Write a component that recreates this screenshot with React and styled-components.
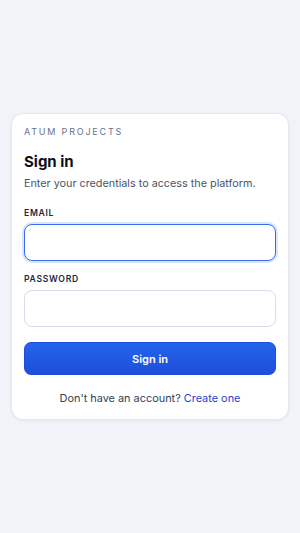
import React from "react";
import styled, { createGlobalStyle } from "styled-components";

const Global = createGlobalStyle`
  html, body { margin: 0; padding: 0; }
  body {
    background: #f0f4f9;
    font-family: Inter, "Noto Sans", sans-serif;
    color: #0f172a;
  }
  * { box-sizing: border-box; }
`;

const Page = styled.div`
  min-height: 533px;
  display: flex;
  align-items: center;
  justify-content: center;
  padding: 0 11px;
`;

const Card = styled.div`
  width: 100%;
  background: #ffffff;
  border: 1px solid #e3e8ef;
  border-radius: 12px;
  box-shadow: 0 1px 3px rgba(15, 23, 42, 0.06);
  padding: 12px 12px 13px;
  display: flex;
  flex-direction: column;
`;

const Brand = styled.div`
  font-size: 9px;
  letter-spacing: 1.8px;
  color: #64748b;
  line-height: 12px;
`;

const Title = styled.h1`
  margin: 14px 0 0;
  font-size: 15px;
  font-weight: 700;
  line-height: 20px;
  color: #0b0f19;
`;

const Subtitle = styled.p`
  margin: 4px 0 0;
  font-size: 10.8px;
  line-height: 16px;
  color: #475569;
`;

const Field = styled.div`
  display: flex;
  flex-direction: column;
  margin-top: ${(p) => p.$top}px;
`;

const Label = styled.label`
  font-size: 8.6px;
  font-weight: 600;
  letter-spacing: 0.7px;
  color: #1e293b;
  line-height: 12px;
  margin-bottom: 5px;
`;

const Input = styled.input`
  height: 37px;
  width: 100%;
  border: 1px solid #d5dde8;
  border-radius: 8px;
  padding: 0 10px;
  font-family: inherit;
  font-size: 12px;
  background: #fff;
  outline: none;
  caret-color: #0f172a;
  &:focus {
    border-color: #3b6cf0;
    box-shadow: 0 0 0 2px #dbe6fd;
  }
`;

const Button = styled.button`
  margin-top: 15px;
  height: 33px;
  border: 1px solid #1d4ed8;
  border-radius: 7px;
  background: linear-gradient(#2563eb, #1d4fdc);
  color: #fff;
  font-family: inherit;
  font-size: 11px;
  font-weight: 600;
  cursor: pointer;
`;

const Footer = styled.p`
  margin: 15px 0 0;
  text-align: center;
  font-size: 10.9px;
  line-height: 16px;
  color: #334155;
`;

const Link = styled.a`
  color: #2443d6;
  text-decoration: none;
`;

export default function App() {
  return (
    <>
      <Global />
      <Page>
        <Card>
          <Brand>ATUM PROJECTS</Brand>
          <Title>Sign in</Title>
          <Subtitle>Enter your credentials to access the platform.</Subtitle>
          <Field $top={15}>
            <Label htmlFor="email">EMAIL</Label>
            <Input id="email" type="email" autoFocus />
          </Field>
          <Field $top={12}>
            <Label htmlFor="password">PASSWORD</Label>
            <Input id="password" type="password" />
          </Field>
          <Button>Sign in</Button>
          <Footer>
            Don't have an account? <Link href="#">Create one</Link>
          </Footer>
        </Card>
      </Page>
    </>
  );
}
